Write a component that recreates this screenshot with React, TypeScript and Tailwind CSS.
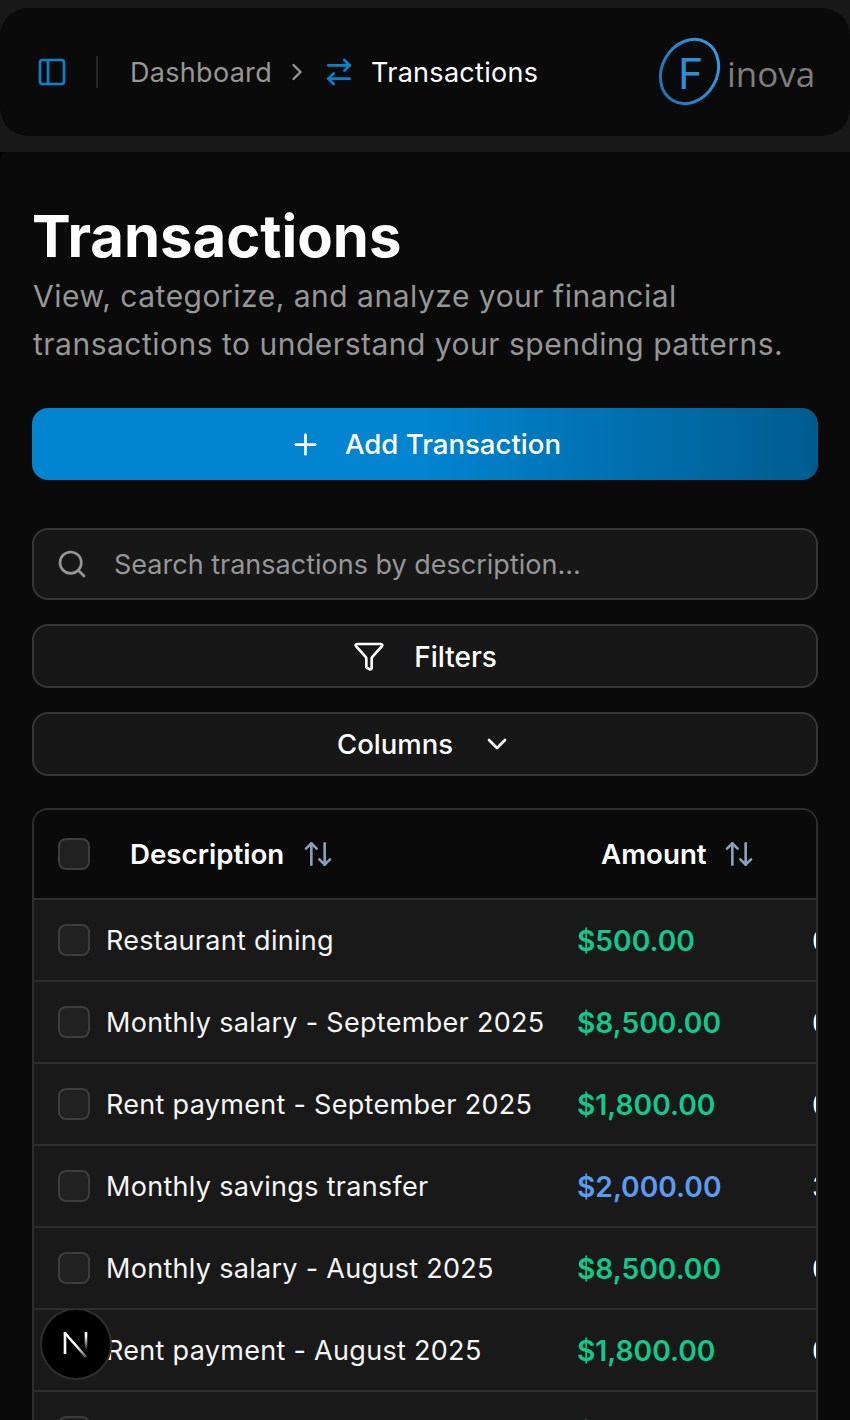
import { ArrowRightLeft, ArrowUpDown, ChevronDown, ChevronRight, Funnel, PanelLeft, Plus, Search } from 'lucide-react';

const rows = [
  { name: 'Restaurant dining', amount: '$500.00', color: 'text-[#10c98a]', date: '09/14/2025' },
  { name: 'Monthly salary - September 2025', amount: '$8,500.00', color: 'text-[#10c98a]', date: '09/01/2025' },
  { name: 'Rent payment - September 2025', amount: '$1,800.00', color: 'text-[#10c98a]', date: '09/01/2025' },
  { name: 'Monthly savings transfer', amount: '$2,000.00', color: 'text-[#5b9cf0]', date: '31/08/2025' },
  { name: 'Monthly salary - August 2025', amount: '$8,500.00', color: 'text-[#10c98a]', date: '08/01/2025' },
  { name: 'Rent payment - August 2025', amount: '$1,800.00', color: 'text-[#10c98a]', date: '08/01/2025' },
  { name: 'Grocery shopping', amount: '$320.00', color: 'text-[#10c98a]', date: '07/28/2025' },
];

const Checkbox = () => <div className="w-8 h-8 shrink-0 rounded-lg border-2 border-[#3d3d3d] bg-[#212121]" />;

const Logo = () => (
  <div className="relative w-[160px] h-[72px]">
    <svg className="absolute left-0 top-0 overflow-visible" width="68" height="68" viewBox="0 0 68 68" fill="none">
      <defs>
        <linearGradient id="ring" x1="60" y1="0" x2="10" y2="68" gradientUnits="userSpaceOnUse">
          <stop offset="0" stopColor="#35a0ec" />
          <stop offset="1" stopColor="#1f6fae" />
        </linearGradient>
      </defs>
      <ellipse cx="33.5" cy="33.5" rx="27.5" ry="33.5" transform="rotate(30 33.5 33.5)" stroke="url(#ring)" strokeWidth="3" />
    </svg>
    <span className="absolute left-[22px] top-[13px] text-[43px] leading-[44px] font-normal text-[#2d8fd8]">F</span>
    <span className="absolute left-[71px] top-[14px] text-[35px] leading-[44px] font-medium text-[#7d7d7d] font-['Open_Sans']">inova</span>
  </div>
);

export default function App() {
  return (
    <div className="relative h-[1420px] overflow-hidden bg-[#181818] font-['Inter',sans-serif] text-white">
      {/* Top bar */}
      <div className="pt-2 pb-4">
        <header className="h-[128px] rounded-[28px] bg-[#0a0a0a] flex items-center pl-[36px] pr-[34px]">
          <PanelLeft size={32} strokeWidth={2} className="text-[#0784c9]" />
          <div className="w-0.5 h-8 bg-[#262626] ml-[28px] mr-[32px]" />
          <span className="pt-[2px] text-[27px] tracking-[0.3px] text-[#969696]">Dashboard</span>
          <ChevronRight size={28} className="text-[#969696] ml-[11px] mr-[12px]" />
          <ArrowRightLeft size={32} className="text-[#0784c9]" />
          <span className="pt-[2px] ml-[16px] text-[27px] tracking-[0.3px] text-white">Transactions</span>
          <div className="ml-auto mt-[4px]">
            <Logo />
          </div>
        </header>
      </div>

      {/* Main */}
      <div className="h-full bg-black">
        <main className="h-full rounded-tl-lg bg-[#0a0a0a] px-8 pt-[48px]">
          <h1 className="text-[58px] leading-[72px] font-bold">Transactions</h1>
          <p className="text-[30px] leading-[48px] tracking-[0.5px] text-[#969696] pl-px">
            View, categorize, and analyze your financial transactions to understand your spending patterns.
          </p>

          <button className="mt-[40px] w-full h-[72px] rounded-2xl bg-linear-to-r from-[#0284d0] from-50% to-[#005c8f] flex items-center justify-center gap-[23px] text-[27.6px] font-medium">
            <Plus size={33} strokeWidth={2} />
            <span className="pt-[2px]">Add Transaction</span>
          </button>

          <div className="mt-12 h-[72px] rounded-2xl border-2 border-[#363636] bg-[#171717] flex items-center pl-[22px] gap-[26px] text-[27px] text-[#969696]">
            <Search size={32} strokeWidth={2} />
            <span className="pt-[2px]">Search transactions by description...</span>
          </div>

          <button className="mt-6 w-full h-16 rounded-2xl border-2 border-[#363636] bg-[#171717] flex items-center justify-center gap-[29px] text-[28px] font-medium">
            <Funnel size={32} strokeWidth={2} />
            <span className="pt-[2px]">Filters</span>
          </button>

          <button className="mt-6 w-full h-16 rounded-2xl border-2 border-[#363636] bg-[#171717] flex items-center justify-center gap-[28px] text-[27.5px] font-medium">
            <span className="pt-[2px]">Columns</span>
            <ChevronDown size={32} strokeWidth={2} />
          </button>

          {/* Table */}
          <div className="mt-8 rounded-2xl border-2 border-[#2e2e2e] overflow-hidden">
            <div className="h-[90px] border-b-2 border-[#2e2e2e] bg-[#0a0a0a] flex items-center text-[27.7px] font-semibold">
              <div className="w-[96px] pl-6 shrink-0"><Checkbox /></div>
              <div className="w-[471px] shrink-0 flex items-center gap-[18px]">
                <span className="pt-[2px]">Description</span>
                <ArrowUpDown size={32} strokeWidth={2} className="text-[#8ba0b8]" />
              </div>
              <div className="flex items-center gap-[16px]">
                <span className="pt-[2px]">Amount</span>
                <ArrowUpDown size={32} strokeWidth={2} className="text-[#8ba0b8]" />
              </div>
            </div>
            {rows.map((row) => (
              <div key={row.name} className="h-[82px] border-b-2 border-[#2e2e2e] bg-[#191919] flex items-center text-[27px] tracking-[0.3px] whitespace-nowrap">
                <div className="w-[72px] pl-6 shrink-0"><Checkbox /></div>
                <div className="w-[471px] shrink-0 pt-[2px] text-[#f5f5f5]">{row.name}</div>
                <div className={`w-[235px] shrink-0 pt-[2px] text-[28.2px] tracking-normal font-semibold ${row.color}`}>{row.amount}</div>
                <div className="shrink-0 pt-[2px] text-[28px]">{row.date}</div>
              </div>
            ))}
          </div>
        </main>
      </div>

      {/* Next.js dev badge */}
      <div className="absolute left-[40px] top-[1308px] w-[72px] h-[72px] rounded-full bg-black border-2 border-[#2e2e2e] flex items-center justify-center">
        <svg width="30" height="30" viewBox="0 0 30 30" fill="none">
          <defs>
            <linearGradient id="nRight" x1="0" y1="3" x2="0" y2="22" gradientUnits="userSpaceOnUse">
              <stop offset="0.2" stopColor="#fff" />
              <stop offset="1" stopColor="#fff" stopOpacity="0" />
            </linearGradient>
            <linearGradient id="nDiag" x1="3" y1="3" x2="25" y2="28" gradientUnits="userSpaceOnUse">
              <stop offset="0.55" stopColor="#fff" />
              <stop offset="1" stopColor="#fff" stopOpacity="0.35" />
            </linearGradient>
          </defs>
          <path d="M4 25V3" stroke="#fff" strokeWidth="2.6" />
          <path d="M3.5 3.5L25 28" stroke="url(#nDiag)" strokeWidth="2.6" />
          <path d="M25 3v19" stroke="url(#nRight)" strokeWidth="2.6" />
        </svg>
      </div>
    </div>
  );
}
